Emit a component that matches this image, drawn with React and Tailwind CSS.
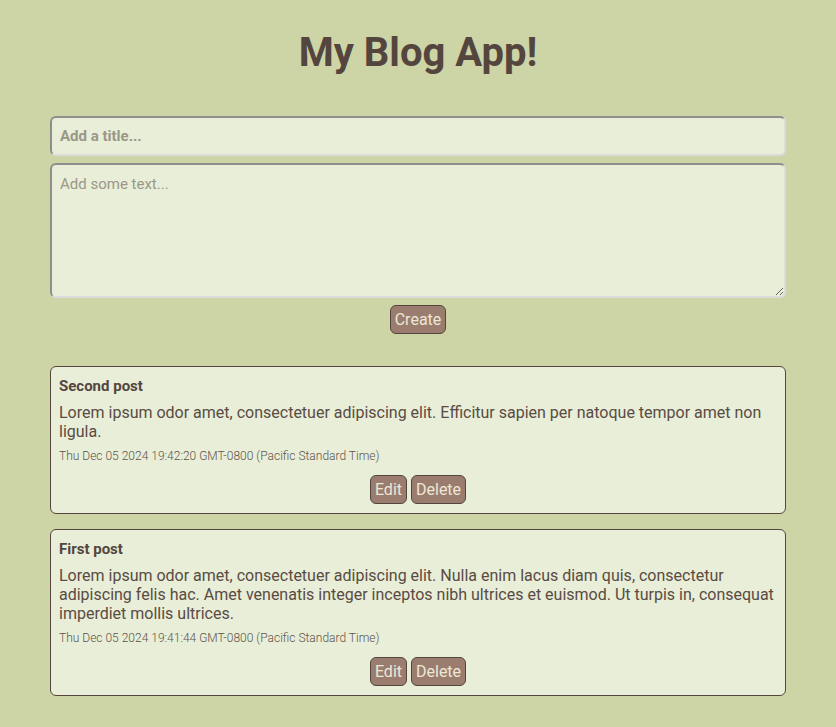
import React from "react";

const posts = [
  {
    title: "Second post",
    body: "Lorem ipsum odor amet, consectetuer adipiscing elit. Efficitur sapien per natoque tempor amet non ligula.",
    date: "Thu Dec 05 2024 19:42:20 GMT-0800 (Pacific Standard Time)",
  },
  {
    title: "First post",
    body: "Lorem ipsum odor amet, consectetuer adipiscing elit. Nulla enim lacus diam quis, consectetur adipiscing felis hac. Amet venenatis integer inceptos nibh ultrices et euismod. Ut turpis in, consequat imperdiet mollis ultrices.",
    date: "Thu Dec 05 2024 19:41:44 GMT-0800 (Pacific Standard Time)",
  },
];

function Btn({ children }) {
  return (
    <button className="h-[29px] px-[4px] rounded-[6px] border border-[#54463e] bg-[#9b7d6f] text-[#ece8d6] text-[16px] leading-none font-['Roboto',sans-serif]">
      {children}
    </button>
  );
}

export default function App() {
  return (
    <div className="min-h-[727px] bg-[#cdd4a5] font-['Roboto',sans-serif] text-[#54463e]">
      <div className="w-[736px] mx-auto pt-[29px] pb-[32px]">
        <h1 className="text-center text-[40px] font-bold leading-[47px] text-[#54463e]">My Blog App!</h1>
        <div className="mt-[40px] flex flex-col gap-[7px]">
          <input
            placeholder="Add a title..."
            className="h-[40px] w-full rounded-[6px] border-2 border-t-[#8e8e8e] border-l-[#8e8e8e] border-b-[#dcdcdc] border-r-[#dcdcdc] bg-[#e8eed8] px-[8px] text-[15px] font-bold placeholder:text-[#9b9788] outline-none"
          />
          <textarea
            placeholder="Add some text..."
            className="h-[135px] w-full rounded-[6px] border-2 border-t-[#8e8e8e] border-l-[#8e8e8e] border-b-[#dcdcdc] border-r-[#dcdcdc] bg-[#e8eed8] px-[8px] py-[8px] text-[15px] placeholder:text-[#9b9788] outline-none resize-y"
          />
        </div>
        <div className="flex justify-center mt-[7px]">
          <Btn>Create</Btn>
        </div>
        <div className="mt-[32px] flex flex-col gap-[15px]">
          {posts.map((p) => (
            <div key={p.title} className="rounded-[6px] border border-[#54463e] bg-[#e8eed8] px-[8px] pt-[9px] pb-[9px]">
              <div className="text-[15px] font-bold leading-[20px]">{p.title}</div>
              <p className="mt-[7px] text-[16px] leading-[19px] text-[#5a4b43]">{p.body}</p>
              <div className="mt-[7px] text-[12px] font-light leading-[16px] text-[#5f534b]">{p.date}</div>
              <div className="mt-[11px] flex justify-center gap-[4px]">
                <Btn>Edit</Btn>
                <Btn>Delete</Btn>
              </div>
            </div>
          ))}
        </div>
      </div>
    </div>
  );
}
